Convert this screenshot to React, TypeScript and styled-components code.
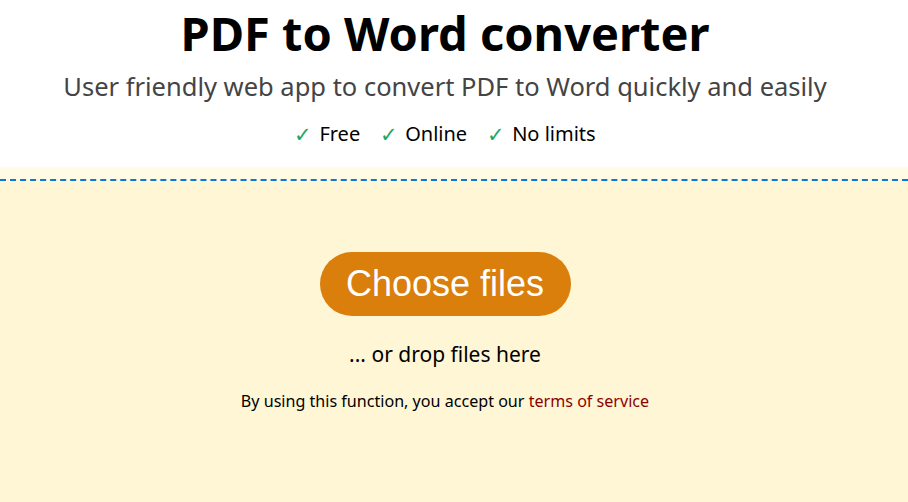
import React from "react";
import styled, { createGlobalStyle } from "styled-components";

const GlobalStyle = createGlobalStyle`
  html, body {
    margin: 0;
    padding: 0;
    background: #fff6d5;
  }
  body {
    font-family: "Noto Sans", "Open Sans", sans-serif;
    color: #000;
  }
`;

const features = ["Free", "Online", "No limits"];

export default function App() {
  return (
    <>
      <GlobalStyle />
      <Page>
        <Header>
          <Title>PDF to Word converter</Title>
          <Subtitle>
            User friendly web app to convert PDF to Word quickly and easily
          </Subtitle>
          <Features>
            {features.map((f) => (
              <Feature key={f}>
                <Check>✓</Check>
                {f}
              </Feature>
            ))}
          </Features>
        </Header>
        <Upload>
          <DropZone>
            <ChooseButton type="button">Choose files</ChooseButton>
            <DropHint>... or drop files here</DropHint>
            <Terms>
              By using this function, you accept our{" "}
              <TermsLink href="#">terms of service</TermsLink>
            </Terms>
          </DropZone>
        </Upload>
      </Page>
    </>
  );
}

const Page = styled.div`
  min-height: 502px;
  display: flex;
  flex-direction: column;
`;

const Header = styled.header`
  background: #fff;
  text-align: center;
  padding: 4px 18px 0 0;
  height: 167px;
  box-sizing: border-box;
`;

const Title = styled.h1`
  margin: 0;
  font-size: 47px;
  line-height: 58px;
  font-weight: 700;
`;

const Subtitle = styled.p`
  margin: 7px 0 0;
  font-size: 25.5px;
  line-height: 34px;
  color: #444;
`;

const Features = styled.ul`
  list-style: none;
  margin: 17px 0 0;
  padding: 0;
  display: flex;
  justify-content: center;
  gap: 20px;
  font-size: 20px;
  line-height: 28px;
`;

const Feature = styled.li`
  display: flex;
  align-items: center;
  gap: 7px;
`;

const Check = styled.span`
  color: #18a860;
  font-size: 21px;
  font-weight: 300;
`;

const Upload = styled.section`
  flex: 1;
  background: #fffbe4;
  padding-top: 12px;
  display: flex;
  flex-direction: column;
`;

const DropZone = styled.div`
  flex: 1;
  background: #fff6d5;
  border-top: 2px dashed #0b7ad6;
  display: flex;
  flex-direction: column;
  align-items: center;
  padding: 71px 18px 0 0;
`;

const ChooseButton = styled.button`
  width: 251px;
  height: 64px;
  border: none;
  border-radius: 32px;
  background: #da7e0c;
  color: #fff;
  font-family: "Liberation Sans", Arial, sans-serif;
  font-size: 36px;
  cursor: pointer;
`;

const DropHint = styled.p`
  margin: 23px 0 0;
  font-size: 21px;
  line-height: 30px;
`;

const Terms = styled.p`
  margin: 22px 0 0;
  font-size: 16.1px;
  line-height: 20px;
`;

const TermsLink = styled.a`
  color: #8b0000;
  text-decoration: none;
`;
